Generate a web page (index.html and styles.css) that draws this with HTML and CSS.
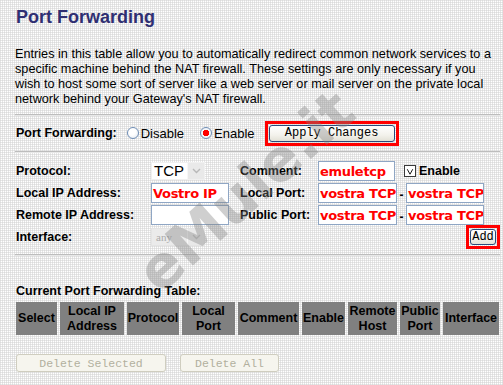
FILE: index.html
```html
<!DOCTYPE html>
<html>
<head>
<meta charset="utf-8">
<link rel="stylesheet" href="styles.css">
</head>
<body>
<div class="page">
  <h1 class="title">Port Forwarding</h1>
  <p class="intro">Entries in this table allow you to automatically redirect common network services to a specific machine behind the NAT firewall. These settings are only necessary if you wish to host some sort of server like a web server or mail server on the private local network behind your Gateway's NAT firewall.</p>
  <div class="rule"></div>
  <div class="pf-row">
    <span class="label">Port Forwarding:</span>
    <span class="radio"></span><span class="opt">Disable</span>
    <span class="radio checked"></span><span class="opt last">Enable</span>
    <span class="frame apply-frame"><span class="btn apply">Apply Changes</span></span>
  </div>
  <div class="rule"></div>
  <div class="form">
    <span class="label">Protocol:</span>
    <div class="cell"><div class="select"><span class="sel-val">TCP</span><span class="sel-btn"><svg width="9" height="6" viewBox="0 0 9 6"><polyline points="1,1 4.5,4.5 8,1" fill="none" stroke="#b8b8b8" stroke-width="1.4"/></svg></span></div></div>
    <span class="label">Comment:</span>
    <div class="cell"><span class="input w77">emuletcp</span><span class="check"><svg width="11" height="11" viewBox="0 0 11 11"><polyline points="2.5,3 5.5,8.5 8.5,3" fill="none" stroke="#000" stroke-width="1"/></svg></span><span class="label">Enable</span></div>

    <span class="label">Local IP Address:</span>
    <div class="cell"><span class="input w78">Vostro IP</span></div>
    <span class="label">Local Port:</span>
    <div class="cell"><span class="input w79">vostra TCP</span><span class="dash">-</span><span class="input w78">vostra TCP</span></div>

    <span class="label">Remote IP Address:</span>
    <div class="cell"><span class="input w78"></span></div>
    <span class="label">Public Port:</span>
    <div class="cell"><span class="input w79">vostra TCP</span><span class="dash">-</span><span class="input w78">vostra TCP</span></div>

    <span class="label">Interface:</span>
    <div class="cell"><div class="select disabled"><span class="sel-val">any</span><span class="sel-btn"><svg width="9" height="6" viewBox="0 0 9 6"><polyline points="1,1 4.5,4.5 8,1" fill="none" stroke="#c4c4c4" stroke-width="1.4"/></svg></span></div></div>
    <span></span>
    <div class="cell end"><span class="frame add-frame"><span class="btn add">Add</span></span></div>
  </div>
  <div class="rule"></div>
  <h2 class="table-title">Current Port Forwarding Table:</h2>
  <table class="tbl">
    <colgroup>
      <col class="c-sel"><col class="c-ip"><col class="c-proto"><col class="c-lport"><col class="c-comm"><col class="c-en"><col class="c-rh"><col class="c-pp"><col class="c-if">
    </colgroup>
    <tr>
      <th>Select</th><th>Local IP<br>Address</th><th>Protocol</th><th>Local<br>Port</th><th>Comment</th><th>Enable</th><th>Remote<br>Host</th><th>Public<br>Port</th><th>Interface</th>
    </tr>
  </table>
  <div class="actions">
    <span class="btn off del-sel">Delete Selected</span>
    <span class="btn off del-all">Delete All</span>
  </div>
  <div class="watermark">eMule.it</div>
</div>
</body>
</html>
```

FILE: styles.css
```css
html, body {
  margin: 0;
  padding: 0;
}
body {
  width: 503px;
  height: 385px;
  overflow: hidden;
  background-color: #ffffff;
  background-image:
    linear-gradient(90deg, rgba(210,210,210,0.55) 1px, transparent 1px),
    linear-gradient(rgba(210,210,210,0.55) 1px, transparent 1px);
  background-size: 2px 2px;
  font-family: "Liberation Sans", Arial, sans-serif;
  color: #000;
}
.page {
  position: relative;
  padding: 6px 3px 0 15px;
  height: 379px;
}
.title {
  margin: 0 0 0 1px;
  font-size: 18px;
  line-height: 22px;
  font-weight: bold;
  color: #2f2f72;
}
.intro {
  margin: 19px 0 0 0;
  font-size: 12.7px;
  line-height: 15px;
}
.rule {
  height: 0;
  border-top: 1px solid #bdbdbd;
  border-bottom: 1px solid #e8e8e8;
}
.intro + .rule { margin-top: 7px; }
.label {
  font-weight: bold;
  font-size: 12.5px;
  white-space: nowrap;
}
.pf-row {
  display: flex;
  align-items: center;
  height: 26px;
  margin-top: 4px;
  margin-bottom: 5px;
  padding-left: 1px;
}
.pf-row .label { margin-right: 10px; }
.radio {
  box-sizing: border-box;
  width: 12px;
  height: 12px;
  border: 1px solid #6e8db5;
  border-radius: 50%;
  background: radial-gradient(circle at 40% 35%, #ffffff 40%, #dfe6ee 100%);
}
.radio.checked {
  background: radial-gradient(circle, #ff0000 0 3px, #f4f6f9 3.5px);
}
.opt {
  font-size: 13px;
  margin-left: 2px;
  margin-right: 16px;
}
.opt.last { margin-right: 10px; }
.frame {
  display: inline-flex;
  border: 3px solid #ff0000;
  padding: 1px;
}
.btn {
  display: inline-flex;
  align-items: center;
  justify-content: center;
  font-family: "Liberation Mono", "Courier New", monospace;
  font-size: 12px;
  color: #000;
  background: linear-gradient(#ffffff, #f3f2ec 60%, #e3e1d6);
  border: 1px solid #2a4a7a;
  border-radius: 3px;
  box-sizing: border-box;
}
.apply { width: 126px; height: 17px; }
.form {
  display: grid;
  grid-template-columns: 135px 89px 78px 1fr;
  grid-auto-rows: 22px;
  align-items: center;
  padding-left: 1px;
  padding-top: 7px;
  padding-bottom: 6px;
}
.cell {
  display: flex;
  align-items: center;
}
.cell.end { justify-content: flex-end; }
.select {
  display: flex;
  align-items: center;
  width: 54px;
  height: 18px;
  background: #fff;
  box-sizing: border-box;
  border: 1px solid #f0f0f0;
}
.sel-val {
  flex: 1;
  font-size: 15px;
  padding-left: 2px;
  line-height: 16px;
}
.sel-btn {
  width: 16px;
  height: 16px;
  background: #e9e9e9;
  border-left: 1px solid #f7f7f7;
  display: flex;
  align-items: center;
  justify-content: center;
}
.select.disabled { background: #ebebeb; border-color: #e4e4e4; }
.select.disabled .sel-val {
  font-family: "Liberation Serif", "Times New Roman", serif;
  font-size: 11px;
  color: #aaaaaa;
  padding-left: 4px;
}
.input {
  display: inline-flex;
  align-items: center;
  height: 20px;
  box-sizing: border-box;
  border: 1px solid #8fa6c4;
  background: #fff;
  font-family: "DejaVu Sans", Verdana, sans-serif;
  font-weight: bold;
  font-size: 13px;
  letter-spacing: -0.3px;
  color: #ff0000;
  padding-left: 1px;
  overflow: hidden;
  white-space: nowrap;
}
.w77 { width: 77px; }
.w78 { width: 78px; }
.w79 { width: 79px; }
.dash {
  width: 9px;
  text-align: center;
  font-weight: bold;
  font-size: 12px;
  padding-top: 4px;
}
.check {
  display: inline-flex;
  align-items: center;
  justify-content: center;
  width: 12px;
  height: 12px;
  border: 1px solid #3a3a3a;
  box-sizing: border-box;
  background: #fff;
  margin-left: 9px;
  margin-right: 3px;
}
.add { width: 26px; height: 16px; }
.table-title {
  margin: 27px 0 0 1px;
  font-size: 12.5px;
  line-height: 16px;
  font-weight: bold;
}
.tbl {
  margin-left: -2px;
  border-collapse: separate;
  border-spacing: 3px;
  table-layout: fixed;
  width: 489px;
}
.c-sel { width: 41px; }
.c-ip { width: 64px; }
.c-proto { width: 52px; }
.c-lport { width: 53px; }
.c-comm { width: 61px; }
.c-en { width: 43px; }
.c-rh { width: 49px; }
.c-pp { width: 40px; }
.c-if { width: 56px; }
.tbl th {
  background: #808080;
  height: 33px;
  padding: 0;
  font-size: 12.5px;
  line-height: 15px;
  font-weight: bold;
  text-align: center;
  vertical-align: middle;
  white-space: nowrap;
  overflow: hidden;
}
.actions {
  display: flex;
  gap: 14px;
  margin-top: 16px;
  padding-left: 1px;
}
.btn.off {
  height: 18px;
  color: #b2b09e;
  background: #f6f5ee;
  border: 1px solid #cfcdbf;
  font-size: 11.5px;
}
.del-sel { width: 150px; }
.del-all { width: 99px; }
.watermark {
  position: absolute;
  left: 112px;
  top: 160px;
  font-family: "DejaVu Sans", Verdana, sans-serif;
  font-weight: bold;
  font-size: 58px;
  line-height: 62px;
  color: rgba(128,128,128,0.38);
  transform: rotate(-42deg);
  transform-origin: center;
  pointer-events: none;
  white-space: nowrap;
}
```
